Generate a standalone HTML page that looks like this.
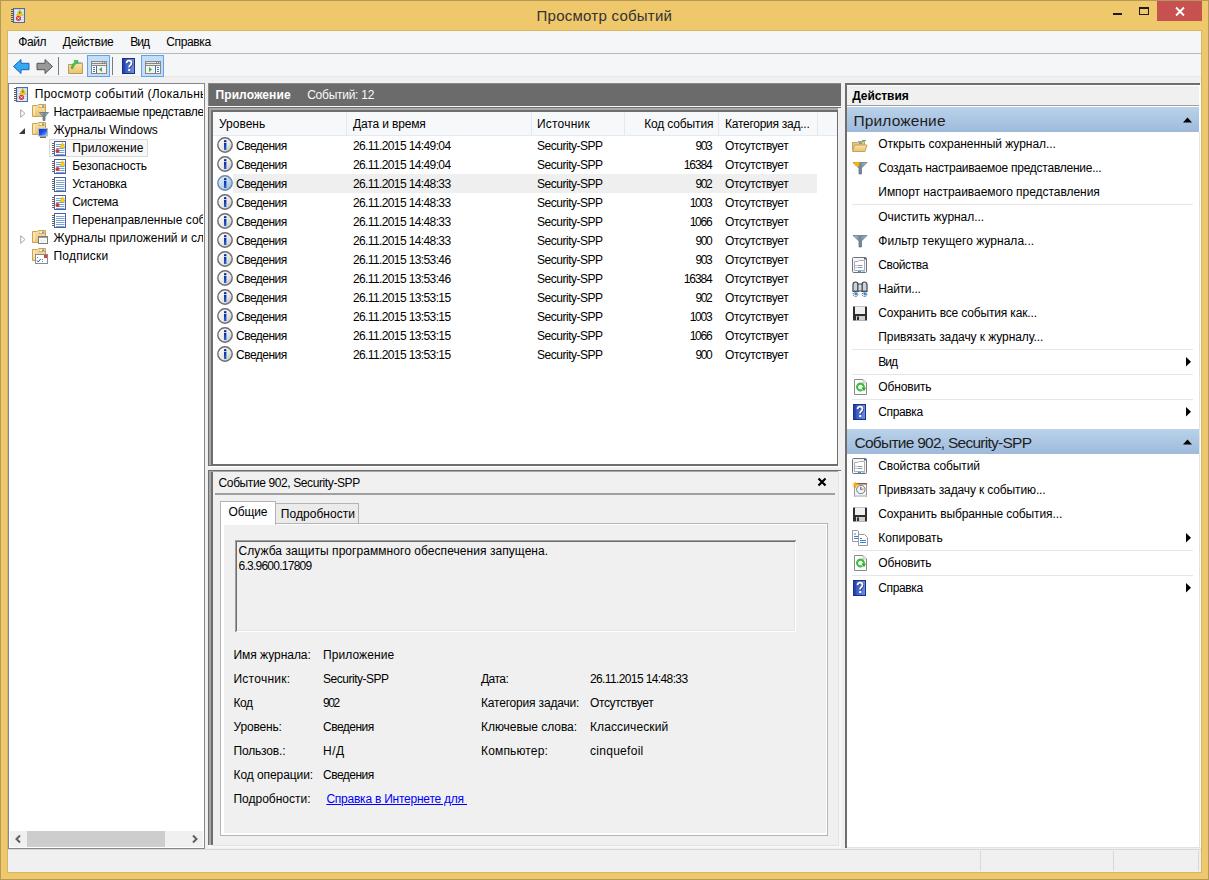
<!DOCTYPE html>
<html><head><meta charset="utf-8">
<style>
*{margin:0;padding:0;box-sizing:border-box}
html,body{width:1209px;height:880px;overflow:hidden}
body{position:relative;background:#efc86b;font-family:"Liberation Sans",sans-serif;font-size:11.5px;color:#000}
.a{position:absolute}
.t{position:absolute;white-space:nowrap}
.clip{position:absolute;overflow:hidden}
</style></head><body>

<svg width="0" height="0" style="position:absolute">
<defs>
<linearGradient id="gInfo" x1="0" y1="0" x2="1" y2="1"><stop offset="0" stop-color="#ffffff"/><stop offset="0.6" stop-color="#e6e6e6"/><stop offset="1" stop-color="#b8b8b8"/></linearGradient>
<linearGradient id="gInfoS" x1="0" y1="0" x2="1" y2="1"><stop offset="0" stop-color="#e4f0fb"/><stop offset="0.6" stop-color="#b9d3ee"/><stop offset="1" stop-color="#88aedb"/></linearGradient>
<linearGradient id="gI" x1="0" y1="0" x2="0" y2="1"><stop offset="0" stop-color="#0c2e98"/><stop offset="1" stop-color="#2a66d8"/></linearGradient><linearGradient id="gBlue" x1="0" y1="0" x2="0" y2="1"><stop offset="0" stop-color="#bcd4ec"/><stop offset="1" stop-color="#9cb9dc"/></linearGradient>
<linearGradient id="gFold" x1="0" y1="0" x2="0" y2="1"><stop offset="0" stop-color="#fbe3a4"/><stop offset="1" stop-color="#e8c274"/></linearGradient>
<linearGradient id="gHelp" x1="0" y1="0" x2="1" y2="0"><stop offset="0" stop-color="#3556c0"/><stop offset="1" stop-color="#6c8fe2"/></linearGradient>
<linearGradient id="gFun" x1="0" y1="0" x2="1" y2="0"><stop offset="0" stop-color="#c9d3dc"/><stop offset="0.5" stop-color="#6e8394"/><stop offset="1" stop-color="#b6c2cc"/></linearGradient>
<symbol id="info" viewBox="0 0 16 16"><circle cx="8" cy="8" r="7.2" fill="url(#gInfo)" stroke="#6c6c6c" stroke-width="1.4"/><rect x="7" y="6" width="2.4" height="7" fill="url(#gI)"/><rect x="7" y="3.2" width="2.4" height="2" fill="#0a2a90"/></symbol>
<symbol id="infoS" viewBox="0 0 16 16"><circle cx="8" cy="8" r="7.2" fill="url(#gInfoS)" stroke="#6a86aa" stroke-width="1.4"/><rect x="7" y="6" width="2.4" height="7" fill="url(#gI)"/><rect x="7" y="3.2" width="2.4" height="2" fill="#0a2a90"/></symbol>
<symbol id="logw" viewBox="0 0 14 15"><rect x="2.5" y="0.5" width="11" height="14" fill="#fff" stroke="#4c5fa6"/><g stroke="#7ba4d6"><path d="M4 3.5h8.5M4 5.5h8.5M4 7.5h8.5M4 9.5h8.5M4 11.5h8.5M4 13.5h8.5"/></g><g fill="#666"><rect x="0" y="2" width="3" height="1"/><rect x="0" y="4" width="3" height="1"/><rect x="0" y="6" width="3" height="1"/><rect x="0" y="8" width="3" height="1"/><rect x="0" y="10" width="3" height="1"/><rect x="0" y="12" width="3" height="1"/></g><path d="M10.5 1.5 L13 6.5 L8 6.5Z" fill="#f4d600" stroke="#d8b000" stroke-width="0.5"/><circle cx="5.5" cy="10" r="2" fill="#d8343a"/></symbol>
<symbol id="log" viewBox="0 0 14 15"><rect x="2.5" y="0.5" width="11" height="14" fill="#fff" stroke="#4c5fa6"/><g stroke="#7ba4d6"><path d="M4 3.5h8.5M4 5.5h8.5M4 7.5h8.5M4 9.5h8.5M4 11.5h8.5M4 13.5h8.5"/></g><g fill="#666"><rect x="0" y="2" width="3" height="1"/><rect x="0" y="4" width="3" height="1"/><rect x="0" y="6" width="3" height="1"/><rect x="0" y="8" width="3" height="1"/><rect x="0" y="10" width="3" height="1"/><rect x="0" y="12" width="3" height="1"/></g></symbol>
<symbol id="ev" viewBox="0 0 14 15"><rect x="2.5" y="0.5" width="11" height="14" fill="#c6d8ef" stroke="#4f6aa8"/><g stroke="#fff" stroke-width="0.9"><path d="M4 3h8.5M4 5.5h8.5M4 8h8.5M4 10.5h8.5M4 13h8.5"/></g><g fill="#5a5a5a"><rect x="0" y="1" width="3" height="1"/><rect x="0" y="3" width="3" height="1"/><rect x="0" y="5" width="3" height="1"/><rect x="0" y="7" width="3" height="1"/><rect x="0" y="9" width="3" height="1"/><rect x="0" y="11" width="3" height="1"/><rect x="0" y="13" width="3" height="1"/></g><path d="M8.8 1.5 L12 7.3 L5.6 7.3Z" fill="#f4d400" stroke="#cfa800" stroke-width="0.6"/><rect x="8.4" y="3.5" width="0.9" height="2.2" fill="#333"/><circle cx="7.5" cy="10.3" r="2.6" fill="#d33a3a"/><path d="M6.5 9.3l2 2M8.5 9.3l-2 2" stroke="#fff" stroke-width="0.9"/></symbol>
<symbol id="fold" viewBox="0 0 14 13"><path d="M0.5 1.5 H5.5 L6.5 0.5 H13.5 V12.5 H0.5 Z" fill="url(#gFold)" stroke="#c9a35a"/><rect x="6.5" y="1" width="6.5" height="2.5" fill="#f3d38c"/><rect x="8" y="1.6" width="2" height="1.3" fill="#fff"/><rect x="10" y="1.6" width="2" height="1.3" fill="#4b95e6"/><path d="M6.5 3.5 H13" stroke="#c9a35a" stroke-width="0.8"/><rect x="1.5" y="2.5" width="1.2" height="9" fill="#fff1c4"/></symbol>
<symbol id="funnel" viewBox="0 0 10 9"><path d="M0.5 0.5h9l-3.5 4v4h-2v-4z" fill="url(#gFun)" stroke="#566878" stroke-width="0.7"/></symbol>
<symbol id="arrL" viewBox="0 0 17 16"><path d="M0.5 7.5 L8 0.5 L8 4.3 L16 4.3 L16 10.7 L8 10.7 L8 14.5Z" fill="#35a9f0" stroke="#1d62c0" stroke-width="1"/></symbol>
<symbol id="arrR" viewBox="0 0 17 16"><path d="M16.5 7.5 L9 0.5 L9 4.3 L1 4.3 L1 10.7 L9 10.7 L9 14.5Z" fill="#9a9a9a" stroke="#555" stroke-width="1"/></symbol>
<symbol id="help" viewBox="0 0 13 16"><rect x="0" y="0" width="13" height="16" fill="#1a2f86"/><rect x="1" y="1" width="2" height="14" fill="#2446b0"/><rect x="3" y="1" width="9" height="14" fill="url(#gHelp)"/><path d="M4.6 5.2 Q4.6 2.6 7 2.6 Q9.5 2.6 9.5 5 Q9.5 6.5 8 7.4 Q7.2 8 7.2 9.6" fill="none" stroke="#222c60" stroke-width="1.8" transform="translate(0.6,0.6)"/><path d="M4.6 5.2 Q4.6 2.6 7 2.6 Q9.5 2.6 9.5 5 Q9.5 6.5 8 7.4 Q7.2 8 7.2 9.6" fill="none" stroke="#fff" stroke-width="1.8"/><rect x="6.2" y="11" width="2" height="2" fill="#fff"/></symbol>
<symbol id="panL" viewBox="0 0 16 13"><rect x="0" y="0" width="16" height="13" fill="#878787"/><rect x="1" y="1" width="10" height="1" fill="#e6e6e6"/><rect x="12" y="1" width="1" height="1" fill="#e6e6e6"/><rect x="14" y="1" width="1" height="1" fill="#e6e6e6"/><rect x="1" y="3" width="14" height="1" fill="#e6e6e6"/><rect x="1" y="5" width="4" height="7" fill="#fff"/><rect x="5" y="5" width="1" height="7" fill="#5d6b7e"/><rect x="6" y="5" width="9" height="7" fill="#f3f3f3"/><g fill="#3a78d6"><rect x="2" y="6" width="2" height="1"/><rect x="2" y="8" width="2" height="1"/><rect x="2" y="10" width="2" height="1"/></g><path d="M11 6 L8 8.5 L11 11Z" fill="#3cb43c"/></symbol>
<symbol id="panR" viewBox="0 0 16 13"><rect x="0" y="0" width="16" height="13" fill="#878787"/><rect x="1" y="1" width="10" height="1" fill="#e6e6e6"/><rect x="12" y="1" width="1" height="1" fill="#e6e6e6"/><rect x="14" y="1" width="1" height="1" fill="#e6e6e6"/><rect x="1" y="3" width="14" height="1" fill="#e6e6e6"/><rect x="1" y="5" width="9" height="7" fill="#f3f3f3"/><rect x="10" y="5" width="1" height="7" fill="#5d6b7e"/><rect x="11" y="5" width="4" height="7" fill="#fff"/><g fill="#3a78d6"><rect x="12" y="6" width="2" height="1"/><rect x="12" y="8" width="2" height="1"/><rect x="12" y="10" width="2" height="1"/></g><path d="M4 6 L7 8.5 L4 11Z" fill="#3cb43c"/></symbol>
</defs></svg>
<div class="a" style="left:0;top:0;width:1209px;height:880px;border:1px solid #b39a5b"></div>
<div class="a" style="left:7px;top:30px;width:1195px;height:843px;border:1px solid #d8b465;background:#f0f0f0"></div>
<div class="t" style="left:536.60px;top:6px;font-size:15px;line-height:19px;letter-spacing:0.246px;color:#333;">Просмотр событий</div>
<svg class="a" style="left:11px;top:8px" width="14" height="15"><use href="#ev"/></svg>
<div class="a" style="left:1157px;top:1px;width:45px;height:20px;background:#c75050;"></div>
<svg class="a" style="left:1157px;top:1px" width="45" height="20"><path d="M19 6.5 L27 14.5 M27 6.5 L19 14.5" stroke="#fff" stroke-width="1.8"/></svg>
<div class="a" style="left:1113px;top:13px;width:9px;height:2px;background:#1c1c1c;"></div>
<div class="a" style="left:1139px;top:7px;width:10px;height:8px;border:1px solid #1c1c1c;border-top-width:2px"></div>
<div class="a" style="left:8px;top:31px;width:1193px;height:22px;background:#f5f6f7;"></div>
<div class="a" style="left:8px;top:53px;width:1193px;height:1px;background:#b9b9b9;"></div>
<div class="a" style="left:8px;top:54px;width:1193px;height:22px;background:#f5f6f7;"></div>
<div class="a" style="left:8px;top:76px;width:1193px;height:1px;background:#e7e7e7;"></div>
<div class="t" style="left:18.30px;top:35px;font-size:12px;line-height:15px;letter-spacing:-0.400px;">Файл</div>
<div class="t" style="left:62.80px;top:35px;font-size:12px;line-height:15px;letter-spacing:-0.254px;">Действие</div>
<div class="t" style="left:130.30px;top:35px;font-size:12px;line-height:15px;letter-spacing:-0.954px;">Вид</div>
<div class="t" style="left:166.30px;top:35px;font-size:12px;line-height:15px;letter-spacing:-0.383px;">Справка</div>
<svg class="a" style="left:12.5px;top:59px" width="17" height="16"><use href="#arrL"/></svg>
<svg class="a" style="left:35.5px;top:59px" width="17" height="16"><use href="#arrR"/></svg>
<div class="a" style="left:58px;top:57px;width:1px;height:18px;background:#7c7c7c;"></div>
<svg class="a" style="left:68px;top:59px" width="15" height="15"><path d="M0.5 5.5h5l1-1.5h8v10.5h-14z" fill="url(#gFold)" stroke="#c09a50"/><path d="M3 9 C4 6 5 4 7 3 L6 1.5 L10 1.5 L9.5 5 L8.5 4 C7 5 6 7 4.5 10Z" fill="#4cc64c" stroke="#2f9a2f" stroke-width="0.6"/><rect x="10" y="3.3" width="3" height="1.4" fill="#6aa9ea"/></svg>
<div class="a" style="left:87px;top:55px;width:23px;height:22px;background:#c5def7;border:1px solid #62a3e6;"></div>
<svg class="a" style="left:91px;top:61px" width="16" height="13"><use href="#panL"/></svg>
<div class="a" style="left:112px;top:57px;width:1px;height:18px;background:#7c7c7c;"></div>
<svg class="a" style="left:122px;top:58px" width="13" height="16"><use href="#help"/></svg>
<div class="a" style="left:141px;top:55px;width:23px;height:22px;background:#c5def7;border:1px solid #62a3e6;"></div>
<svg class="a" style="left:145px;top:61px" width="16" height="13"><use href="#panR"/></svg>
<div class="a" style="left:8px;top:83px;width:197px;height:766px;background:#fff;border:1px solid #828790"></div>
<div class="clip" style="left:9px;top:84px;width:194px;height:746px">
<svg class="a" style="left:5px;top:3px" width="14" height="15"><use href="#ev"/></svg>
<div class="t" style="left:25.80px;top:3px;font-size:12px;line-height:15px;letter-spacing:0.236px;">Просмотр событий (Локальный)</div>
<svg class="a" style="left:11px;top:25px" width="6" height="9"><path d="M0.7 0.7 L5 4.5 L0.7 8.3Z" fill="none" stroke="#a6a6a6" stroke-width="1"/></svg>
<svg class="a" style="left:23px;top:20px" width="14" height="13"><use href="#fold"/></svg>
<svg class="a" style="left:30px;top:28px" width="10" height="9"><use href="#funnel"/></svg>
<div class="t" style="left:44.50px;top:21px;font-size:12px;line-height:15px;letter-spacing:-0.311px;">Настраиваемые представления</div>
<svg class="a" style="left:10px;top:44px" width="6" height="6"><path d="M6 0 L6 6 L0 6Z" fill="#3a3a3a"/></svg>
<svg class="a" style="left:23px;top:38px" width="14" height="13"><use href="#fold"/></svg>
<svg class="a" style="left:29px;top:44px" width="10" height="10"><defs><linearGradient id="gMon" x1="0" y1="0" x2="1" y2="1"><stop offset="0" stop-color="#0a2ad8"/><stop offset="0.55" stop-color="#1f5ae8"/><stop offset="1" stop-color="#c8d4ff"/></linearGradient></defs><rect x="0.5" y="0.5" width="9" height="7.5" fill="url(#gMon)" stroke="#b8b8b8"/><rect x="2" y="8.5" width="6" height="1.5" fill="#666"/></svg>
<div class="t" style="left:44.50px;top:39px;font-size:12px;line-height:15px;letter-spacing:-0.009px;">Журналы Windows</div>
<div class="a" style="left:40px;top:55px;width:99px;height:18px;background:#f7f7f7;border:1px solid #dadada"></div>
<svg class="a" style="left:43px;top:57px" width="14" height="15"><use href="#logw"/></svg>
<div class="t" style="left:63.30px;top:57px;font-size:12px;line-height:15px;letter-spacing:0.088px;">Приложение</div>
<svg class="a" style="left:43px;top:75px" width="14" height="15"><use href="#logw"/></svg>
<div class="t" style="left:63.30px;top:75px;font-size:12px;line-height:15px;letter-spacing:-0.163px;">Безопасность</div>
<svg class="a" style="left:43px;top:93px" width="14" height="15"><use href="#log"/></svg>
<div class="t" style="left:63.30px;top:93px;font-size:12px;line-height:15px;letter-spacing:-0.256px;">Установка</div>
<svg class="a" style="left:43px;top:111px" width="14" height="15"><use href="#logw"/></svg>
<div class="t" style="left:63.30px;top:111px;font-size:12px;line-height:15px;letter-spacing:-0.376px;">Система</div>
<svg class="a" style="left:43px;top:129px" width="14" height="15"><use href="#log"/></svg>
<div class="t" style="left:63.30px;top:129px;font-size:12px;line-height:15px;">Перенаправленные события</div>
<svg class="a" style="left:11px;top:151px" width="6" height="9"><path d="M0.7 0.7 L5 4.5 L0.7 8.3Z" fill="none" stroke="#a6a6a6" stroke-width="1"/></svg>
<svg class="a" style="left:23px;top:146px" width="14" height="13"><use href="#fold"/></svg>
<svg class="a" style="left:29px;top:152px" width="10" height="8"><rect x="0.5" y="0.5" width="9" height="7" fill="#fff" stroke="#7d7d7d"/><rect x="1" y="1" width="8" height="1" fill="#9a9a9a"/><rect x="2" y="3.5" width="6" height="3" fill="#f0f0f0"/></svg>
<div class="t" style="left:44.50px;top:147px;font-size:12px;line-height:15px;">Журналы приложений и служб</div>
<svg class="a" style="left:23px;top:164px" width="14" height="13"><use href="#fold"/></svg>
<svg class="a" style="left:26px;top:170px" width="13" height="10"><rect x="0.5" y="0.5" width="12" height="9" fill="#fff" stroke="#8a8a8a"/><rect x="9" y="1" width="3" height="3" fill="#d84040"/><g fill="#3a80d8"><rect x="2" y="3" width="1" height="1"/><rect x="7" y="5" width="1" height="1"/><rect x="7" y="7" width="1" height="1"/></g><path d="M2 6.5 l1.2 1.5 l2.5 -3" stroke="#1e5ec8" fill="none" stroke-width="1"/></svg>
<div class="t" style="left:44.50px;top:165px;font-size:12px;line-height:15px;letter-spacing:0.216px;">Подписки</div>
</div>
<div class="a" style="left:10px;top:831px;width:193px;height:16px;background:#f0f0f0;"></div>
<div class="a" style="left:27px;top:831px;width:138px;height:16px;background:#cdcdcd;"></div>
<svg class="a" style="left:14px;top:834px" width="8" height="10"><path d="M6 1.5 L2.5 5 L6 8.5" fill="none" stroke="#606060" stroke-width="2"/></svg>
<svg class="a" style="left:191px;top:834px" width="8" height="10"><path d="M2 1.5 L5.5 5 L2 8.5" fill="none" stroke="#606060" stroke-width="2"/></svg>
<div class="a" style="left:208px;top:83px;width:633px;height:23px;background:#6b6b6b;"></div>
<div class="a" style="left:208px;top:83px;width:633px;height:1px;background:#888888;"></div>
<div class="a" style="left:208px;top:83px;width:1px;height:23px;background:#888888;"></div>
<div class="a" style="left:208px;top:106px;width:633px;height:1px;background:#f7f7f7;"></div>
<div class="t" style="left:215.50px;top:88px;font-size:12px;line-height:15px;letter-spacing:0.087px;color:#fff;font-weight:bold;">Приложение</div>
<div class="t" style="left:307.20px;top:88px;font-size:12px;line-height:15px;letter-spacing:-0.258px;color:#fafafa;">Событий: 12</div>
<div class="a" style="left:208px;top:107px;width:633px;height:359px;background:#6e6e6e;"></div>
<div class="a" style="left:209px;top:108px;width:631px;height:357px;background:#a8a8a8;"></div>
<div class="a" style="left:211px;top:110px;width:627px;height:355px;background:#6e6e6e;"></div>
<div class="a" style="left:213px;top:112px;width:624px;height:352px;background:#ffffff;"></div>
<div class="a" style="left:838px;top:108px;width:3px;height:358px;background:#f0f0f0;"></div>
<div class="a" style="left:208px;top:466px;width:633px;height:4px;background:#f0f0f0;"></div>
<div class="a" style="left:209px;top:466px;width:631px;height:1px;background:#ffffff;"></div>
<div class="a" style="left:213px;top:112px;width:624px;height:23px;background:#f7f8fa;"></div>
<div class="a" style="left:213px;top:135px;width:624px;height:1px;background:#e1ebf6;"></div>
<div class="a" style="left:346px;top:112px;width:1px;height:23px;background:#e3e9f1;"></div>
<div class="a" style="left:531px;top:112px;width:1px;height:23px;background:#e3e9f1;"></div>
<div class="a" style="left:624px;top:112px;width:1px;height:23px;background:#e3e9f1;"></div>
<div class="a" style="left:718px;top:112px;width:1px;height:23px;background:#e3e9f1;"></div>
<div class="a" style="left:817px;top:112px;width:1px;height:23px;background:#e3e9f1;"></div>
<div class="t" style="left:219.00px;top:117px;font-size:12px;line-height:15px;">Уровень</div>
<div class="t" style="left:353.00px;top:117px;font-size:12px;line-height:15px;letter-spacing:-0.147px;">Дата и время</div>
<div class="t" style="left:537.00px;top:117px;font-size:12px;line-height:15px;letter-spacing:0.203px;">Источник</div>
<div class="t" style="left:644.20px;top:117px;font-size:12px;line-height:15px;letter-spacing:-0.144px;">Код события</div>
<div class="t" style="left:725.00px;top:117px;font-size:12px;line-height:15px;letter-spacing:-0.258px;">Категория зад...</div>
<svg class="a" style="left:217px;top:137px" width="16" height="16"><use href="#info"/></svg>
<div class="t" style="left:236.00px;top:139px;font-size:12px;line-height:15px;letter-spacing:-0.503px;">Сведения</div>
<div class="t" style="left:353.00px;top:139px;font-size:12px;line-height:15px;letter-spacing:-0.619px;">26.11.2015 14:49:04</div>
<div class="t" style="left:537.00px;top:139px;font-size:12px;line-height:15px;letter-spacing:-0.477px;">Security-SPP</div>
<div class="t" style="left:695.60px;top:139px;font-size:12px;line-height:15px;letter-spacing:-1.474px;">903</div>
<div class="t" style="left:725.00px;top:139px;font-size:12px;line-height:15px;letter-spacing:-0.360px;">Отсутствует</div>
<svg class="a" style="left:217px;top:156px" width="16" height="16"><use href="#info"/></svg>
<div class="t" style="left:236.00px;top:158px;font-size:12px;line-height:15px;letter-spacing:-0.503px;">Сведения</div>
<div class="t" style="left:353.00px;top:158px;font-size:12px;line-height:15px;letter-spacing:-0.619px;">26.11.2015 14:49:04</div>
<div class="t" style="left:537.00px;top:158px;font-size:12px;line-height:15px;letter-spacing:-0.477px;">Security-SPP</div>
<div class="t" style="left:683.80px;top:158px;font-size:12px;line-height:15px;letter-spacing:-1.124px;">16384</div>
<div class="t" style="left:725.00px;top:158px;font-size:12px;line-height:15px;letter-spacing:-0.360px;">Отсутствует</div>
<div class="a" style="left:233px;top:174px;width:584px;height:19px;background:#efefef;"></div>
<svg class="a" style="left:217px;top:175px" width="16" height="16"><use href="#infoS"/></svg>
<div class="t" style="left:236.00px;top:177px;font-size:12px;line-height:15px;letter-spacing:-0.503px;">Сведения</div>
<div class="t" style="left:353.00px;top:177px;font-size:12px;line-height:15px;letter-spacing:-0.619px;">26.11.2015 14:48:33</div>
<div class="t" style="left:537.00px;top:177px;font-size:12px;line-height:15px;letter-spacing:-0.477px;">Security-SPP</div>
<div class="t" style="left:695.50px;top:177px;font-size:12px;line-height:15px;letter-spacing:-1.424px;">902</div>
<div class="t" style="left:725.00px;top:177px;font-size:12px;line-height:15px;letter-spacing:-0.360px;">Отсутствует</div>
<svg class="a" style="left:217px;top:194px" width="16" height="16"><use href="#info"/></svg>
<div class="t" style="left:236.00px;top:196px;font-size:12px;line-height:15px;letter-spacing:-0.503px;">Сведения</div>
<div class="t" style="left:353.00px;top:196px;font-size:12px;line-height:15px;letter-spacing:-0.619px;">26.11.2015 14:48:33</div>
<div class="t" style="left:537.00px;top:196px;font-size:12px;line-height:15px;letter-spacing:-0.477px;">Security-SPP</div>
<div class="t" style="left:689.70px;top:196px;font-size:12px;line-height:15px;letter-spacing:-1.240px;">1003</div>
<div class="t" style="left:725.00px;top:196px;font-size:12px;line-height:15px;letter-spacing:-0.360px;">Отсутствует</div>
<svg class="a" style="left:217px;top:213px" width="16" height="16"><use href="#info"/></svg>
<div class="t" style="left:236.00px;top:215px;font-size:12px;line-height:15px;letter-spacing:-0.503px;">Сведения</div>
<div class="t" style="left:353.00px;top:215px;font-size:12px;line-height:15px;letter-spacing:-0.619px;">26.11.2015 14:48:33</div>
<div class="t" style="left:537.00px;top:215px;font-size:12px;line-height:15px;letter-spacing:-0.477px;">Security-SPP</div>
<div class="t" style="left:689.70px;top:215px;font-size:12px;line-height:15px;letter-spacing:-1.240px;">1066</div>
<div class="t" style="left:725.00px;top:215px;font-size:12px;line-height:15px;letter-spacing:-0.360px;">Отсутствует</div>
<svg class="a" style="left:217px;top:232px" width="16" height="16"><use href="#info"/></svg>
<div class="t" style="left:236.00px;top:234px;font-size:12px;line-height:15px;letter-spacing:-0.503px;">Сведения</div>
<div class="t" style="left:353.00px;top:234px;font-size:12px;line-height:15px;letter-spacing:-0.619px;">26.11.2015 14:48:33</div>
<div class="t" style="left:537.00px;top:234px;font-size:12px;line-height:15px;letter-spacing:-0.477px;">Security-SPP</div>
<div class="t" style="left:695.60px;top:234px;font-size:12px;line-height:15px;letter-spacing:-1.474px;">900</div>
<div class="t" style="left:725.00px;top:234px;font-size:12px;line-height:15px;letter-spacing:-0.360px;">Отсутствует</div>
<svg class="a" style="left:217px;top:251px" width="16" height="16"><use href="#info"/></svg>
<div class="t" style="left:236.00px;top:253px;font-size:12px;line-height:15px;letter-spacing:-0.503px;">Сведения</div>
<div class="t" style="left:353.00px;top:253px;font-size:12px;line-height:15px;letter-spacing:-0.619px;">26.11.2015 13:53:46</div>
<div class="t" style="left:537.00px;top:253px;font-size:12px;line-height:15px;letter-spacing:-0.477px;">Security-SPP</div>
<div class="t" style="left:695.60px;top:253px;font-size:12px;line-height:15px;letter-spacing:-1.474px;">903</div>
<div class="t" style="left:725.00px;top:253px;font-size:12px;line-height:15px;letter-spacing:-0.360px;">Отсутствует</div>
<svg class="a" style="left:217px;top:270px" width="16" height="16"><use href="#info"/></svg>
<div class="t" style="left:236.00px;top:272px;font-size:12px;line-height:15px;letter-spacing:-0.503px;">Сведения</div>
<div class="t" style="left:353.00px;top:272px;font-size:12px;line-height:15px;letter-spacing:-0.619px;">26.11.2015 13:53:46</div>
<div class="t" style="left:537.00px;top:272px;font-size:12px;line-height:15px;letter-spacing:-0.477px;">Security-SPP</div>
<div class="t" style="left:683.80px;top:272px;font-size:12px;line-height:15px;letter-spacing:-1.124px;">16384</div>
<div class="t" style="left:725.00px;top:272px;font-size:12px;line-height:15px;letter-spacing:-0.360px;">Отсутствует</div>
<svg class="a" style="left:217px;top:289px" width="16" height="16"><use href="#info"/></svg>
<div class="t" style="left:236.00px;top:291px;font-size:12px;line-height:15px;letter-spacing:-0.503px;">Сведения</div>
<div class="t" style="left:353.00px;top:291px;font-size:12px;line-height:15px;letter-spacing:-0.619px;">26.11.2015 13:53:15</div>
<div class="t" style="left:537.00px;top:291px;font-size:12px;line-height:15px;letter-spacing:-0.477px;">Security-SPP</div>
<div class="t" style="left:695.50px;top:291px;font-size:12px;line-height:15px;letter-spacing:-1.424px;">902</div>
<div class="t" style="left:725.00px;top:291px;font-size:12px;line-height:15px;letter-spacing:-0.360px;">Отсутствует</div>
<svg class="a" style="left:217px;top:308px" width="16" height="16"><use href="#info"/></svg>
<div class="t" style="left:236.00px;top:310px;font-size:12px;line-height:15px;letter-spacing:-0.503px;">Сведения</div>
<div class="t" style="left:353.00px;top:310px;font-size:12px;line-height:15px;letter-spacing:-0.619px;">26.11.2015 13:53:15</div>
<div class="t" style="left:537.00px;top:310px;font-size:12px;line-height:15px;letter-spacing:-0.477px;">Security-SPP</div>
<div class="t" style="left:689.70px;top:310px;font-size:12px;line-height:15px;letter-spacing:-1.240px;">1003</div>
<div class="t" style="left:725.00px;top:310px;font-size:12px;line-height:15px;letter-spacing:-0.360px;">Отсутствует</div>
<svg class="a" style="left:217px;top:327px" width="16" height="16"><use href="#info"/></svg>
<div class="t" style="left:236.00px;top:329px;font-size:12px;line-height:15px;letter-spacing:-0.503px;">Сведения</div>
<div class="t" style="left:353.00px;top:329px;font-size:12px;line-height:15px;letter-spacing:-0.619px;">26.11.2015 13:53:15</div>
<div class="t" style="left:537.00px;top:329px;font-size:12px;line-height:15px;letter-spacing:-0.477px;">Security-SPP</div>
<div class="t" style="left:689.70px;top:329px;font-size:12px;line-height:15px;letter-spacing:-1.240px;">1066</div>
<div class="t" style="left:725.00px;top:329px;font-size:12px;line-height:15px;letter-spacing:-0.360px;">Отсутствует</div>
<svg class="a" style="left:217px;top:346px" width="16" height="16"><use href="#info"/></svg>
<div class="t" style="left:236.00px;top:348px;font-size:12px;line-height:15px;letter-spacing:-0.503px;">Сведения</div>
<div class="t" style="left:353.00px;top:348px;font-size:12px;line-height:15px;letter-spacing:-0.619px;">26.11.2015 13:53:15</div>
<div class="t" style="left:537.00px;top:348px;font-size:12px;line-height:15px;letter-spacing:-0.477px;">Security-SPP</div>
<div class="t" style="left:695.60px;top:348px;font-size:12px;line-height:15px;letter-spacing:-1.474px;">900</div>
<div class="t" style="left:725.00px;top:348px;font-size:12px;line-height:15px;letter-spacing:-0.360px;">Отсутствует</div>
<div class="a" style="left:208px;top:470px;width:633px;height:377px;background:#6e6e6e;"></div>
<div class="a" style="left:209px;top:471px;width:631px;height:375px;background:#a8a8a8;"></div>
<div class="a" style="left:211px;top:472px;width:627px;height:373px;background:#6e6e6e;"></div>
<div class="a" style="left:213px;top:472px;width:625px;height:373px;background:#f0f0f0;"></div>
<div class="a" style="left:838px;top:471px;width:3px;height:377px;background:#f7f7f7;"></div>
<div class="a" style="left:208px;top:845px;width:633px;height:3px;background:#f7f7f7;"></div>
<div class="a" style="left:838px;top:472px;width:1px;height:374px;background:#e3e3e3;"></div>
<div class="a" style="left:213px;top:845px;width:626px;height:1px;background:#e3e3e3;"></div>
<div class="t" style="left:218.60px;top:476px;font-size:12px;line-height:15px;letter-spacing:-0.395px;">Событие 902, Security-SPP</div>
<svg class="a" style="left:817px;top:477px" width="10" height="10"><path d="M1.5 1.5 L8.5 8.5 M8.5 1.5 L1.5 8.5" stroke="#000" stroke-width="2.2"/></svg>
<div class="a" style="left:215px;top:493px;width:620px;height:2px;background:#a0a0a0;"></div>
<div class="a" style="left:220px;top:523px;width:608px;height:313px;background:#ffffff;border:1px solid #b4b4b4;"></div>
<div class="a" style="left:224px;top:525px;width:602px;height:308px;background:#f0f0f0;"></div>
<div class="a" style="left:275px;top:503px;width:84px;height:20px;background:#ebebeb;border:1px solid #b4b4b4;border-bottom:none;"></div>
<div class="a" style="left:220px;top:501px;width:56px;height:24px;background:#ffffff;border:1px solid #b4b4b4;border-bottom:none;"></div>
<div class="t" style="left:228.50px;top:505px;font-size:12px;line-height:15px;letter-spacing:-0.121px;">Общие</div>
<div class="t" style="left:280.80px;top:507px;font-size:12px;line-height:15px;letter-spacing:0.045px;">Подробности</div>
<div class="a" style="left:235px;top:540px;width:561px;height:92px;background:#f0f0f0;border-top:2px solid #6e6e6e;border-left:2px solid #6e6e6e;border-right:1px solid #fff;border-bottom:1px solid #fff;"></div>
<div class="a" style="left:235px;top:540px;width:560px;height:1px;background:#a0a0a0;"></div>
<div class="a" style="left:235px;top:540px;width:1px;height:91px;background:#a0a0a0;"></div>
<div class="a" style="left:237px;top:630px;width:558px;height:1px;background:#e3e3e3;"></div>
<div class="a" style="left:794px;top:542px;width:1px;height:89px;background:#e3e3e3;"></div>
<div class="t" style="left:238.50px;top:544px;font-size:12px;line-height:15px;letter-spacing:0.057px;">Служба защиты программного обеспечения запущена.</div>
<div class="t" style="left:238.50px;top:559px;font-size:12px;line-height:15px;letter-spacing:-0.749px;">6.3.9600.17809</div>
<div class="t" style="left:233.50px;top:648px;font-size:12px;line-height:15px;letter-spacing:-0.035px;">Имя журнала:</div>
<div class="t" style="left:323.00px;top:648px;font-size:12px;line-height:15px;letter-spacing:0.088px;">Приложение</div>
<div class="t" style="left:233.50px;top:672px;font-size:12px;line-height:15px;letter-spacing:0.246px;">Источник:</div>
<div class="t" style="left:323.00px;top:672px;font-size:12px;line-height:15px;letter-spacing:-0.477px;">Security-SPP</div>
<div class="t" style="left:481.00px;top:672px;font-size:12px;line-height:15px;letter-spacing:-0.543px;">Дата:</div>
<div class="t" style="left:590.00px;top:672px;font-size:12px;line-height:15px;letter-spacing:-0.619px;">26.11.2015 14:48:33</div>
<div class="t" style="left:233.50px;top:696px;font-size:12px;line-height:15px;letter-spacing:-0.400px;">Код</div>
<div class="t" style="left:323.00px;top:696px;font-size:12px;line-height:15px;letter-spacing:-1.424px;">902</div>
<div class="t" style="left:481.00px;top:696px;font-size:12px;line-height:15px;letter-spacing:-0.186px;">Категория задачи:</div>
<div class="t" style="left:590.00px;top:696px;font-size:12px;line-height:15px;letter-spacing:-0.360px;">Отсутствует</div>
<div class="t" style="left:233.50px;top:720px;font-size:12px;line-height:15px;letter-spacing:-0.175px;">Уровень:</div>
<div class="t" style="left:323.00px;top:720px;font-size:12px;line-height:15px;letter-spacing:-0.503px;">Сведения</div>
<div class="t" style="left:481.00px;top:720px;font-size:12px;line-height:15px;letter-spacing:-0.049px;">Ключевые слова:</div>
<div class="t" style="left:590.00px;top:720px;font-size:12px;line-height:15px;letter-spacing:0.114px;">Классический</div>
<div class="t" style="left:233.50px;top:744px;font-size:12px;line-height:15px;letter-spacing:-0.167px;">Пользов.:</div>
<div class="t" style="left:323.00px;top:744px;font-size:12px;line-height:15px;letter-spacing:0.500px;">Н/Д</div>
<div class="t" style="left:481.00px;top:744px;font-size:12px;line-height:15px;letter-spacing:0.155px;">Компьютер:</div>
<div class="t" style="left:590.00px;top:744px;font-size:12px;line-height:15px;letter-spacing:0.285px;">cinquefoil</div>
<div class="t" style="left:233.50px;top:768px;font-size:12px;line-height:15px;letter-spacing:-0.076px;">Код операции:</div>
<div class="t" style="left:323.00px;top:768px;font-size:12px;line-height:15px;letter-spacing:-0.503px;">Сведения</div>
<div class="t" style="left:233.50px;top:792px;font-size:12px;line-height:15px;letter-spacing:-0.005px;">Подробности:</div>
<div class="t" style="left:326.40px;top:792px;font-size:12px;line-height:15px;letter-spacing:-0.233px;color:#0000ff;text-decoration:underline;">Справка в Интернете для </div>
<div class="a" style="left:845px;top:83px;width:356px;height:765px;background:#ffffff;"></div>
<div class="a" style="left:845px;top:83px;width:355px;height:2px;background:#6e6e6e;"></div>
<div class="a" style="left:845px;top:83px;width:2px;height:765px;background:#6e6e6e;"></div>
<div class="a" style="left:847px;top:86px;width:352px;height:19px;background:#f0f0f0;"></div>
<div class="a" style="left:847px;top:105px;width:352px;height:1px;background:#a0a0a0;"></div>
<div class="t" style="left:852.20px;top:89px;font-size:12px;line-height:15px;letter-spacing:-0.079px;font-weight:bold;">Действия</div>
<div class="a" style="left:847px;top:107px;width:352px;height:25px;background:linear-gradient(#bad2ea,#9ebadc);"></div>
<div class="t" style="left:853.50px;top:111px;font-size:15.5px;line-height:20px;letter-spacing:0.123px;color:#1e1e1e;">Приложение</div>
<svg class="a" style="left:1183px;top:117px" width="10" height="6"><path d="M0 5.5 L4.5 0.5 L9 5.5Z" fill="#000"/></svg>
<div class="t" style="left:878.30px;top:137px;font-size:12px;line-height:15px;letter-spacing:-0.038px;">Открыть сохраненный журнал...</div>
<svg class="a" style="left:852px;top:136px" width="16" height="16"><use href="#a_open"/></svg>
<div class="t" style="left:878.30px;top:161px;font-size:12px;line-height:15px;letter-spacing:-0.253px;">Создать настраиваемое представление...</div>
<svg class="a" style="left:852px;top:160px" width="16" height="16"><use href="#a_funO"/></svg>
<div class="t" style="left:878.30px;top:185px;font-size:12px;line-height:15px;letter-spacing:-0.044px;">Импорт настраиваемого представления</div>
<div class="a" style="left:852px;top:204px;width:341px;height:1px;background:#e6e6e6;"></div>
<div class="t" style="left:878.30px;top:210px;font-size:12px;line-height:15px;letter-spacing:-0.044px;">Очистить журнал...</div>
<div class="t" style="left:878.30px;top:234px;font-size:12px;line-height:15px;letter-spacing:0.022px;">Фильтр текущего журнала...</div>
<svg class="a" style="left:852px;top:233px" width="16" height="16"><use href="#a_funG"/></svg>
<div class="t" style="left:878.30px;top:258px;font-size:12px;line-height:15px;letter-spacing:-0.374px;">Свойства</div>
<svg class="a" style="left:852px;top:257px" width="16" height="16"><use href="#a_props"/></svg>
<div class="t" style="left:878.30px;top:282px;font-size:12px;line-height:15px;letter-spacing:-0.244px;">Найти...</div>
<svg class="a" style="left:852px;top:281px" width="16" height="16"><use href="#a_find"/></svg>
<div class="t" style="left:878.30px;top:306px;font-size:12px;line-height:15px;letter-spacing:-0.158px;">Сохранить все события как...</div>
<svg class="a" style="left:852px;top:305px" width="16" height="16"><use href="#a_save"/></svg>
<div class="t" style="left:878.30px;top:330px;font-size:12px;line-height:15px;letter-spacing:-0.084px;">Привязать задачу к журналу...</div>
<div class="a" style="left:852px;top:349px;width:341px;height:1px;background:#e6e6e6;"></div>
<div class="t" style="left:878.30px;top:355px;font-size:12px;line-height:15px;letter-spacing:-0.954px;">Вид</div>
<svg class="a" style="left:1186px;top:357px" width="6" height="10"><path d="M0 0 L5 4.8 L0 9.6Z" fill="#000"/></svg>
<div class="a" style="left:852px;top:374px;width:341px;height:1px;background:#e6e6e6;"></div>
<div class="t" style="left:878.30px;top:380px;font-size:12px;line-height:15px;letter-spacing:-0.155px;">Обновить</div>
<svg class="a" style="left:852px;top:379px" width="16" height="16"><use href="#a_refresh"/></svg>
<div class="a" style="left:852px;top:399px;width:341px;height:1px;background:#e6e6e6;"></div>
<div class="t" style="left:878.30px;top:405px;font-size:12px;line-height:15px;letter-spacing:-0.383px;">Справка</div>
<svg class="a" style="left:852px;top:404px" width="16" height="16"><use href="#a_helpS"/></svg>
<svg class="a" style="left:1186px;top:407px" width="6" height="10"><path d="M0 0 L5 4.8 L0 9.6Z" fill="#000"/></svg>
<div class="a" style="left:847px;top:429px;width:352px;height:25px;background:linear-gradient(#bad2ea,#9ebadc);"></div>
<div class="t" style="left:854.50px;top:433px;font-size:15.5px;line-height:20px;letter-spacing:-0.734px;color:#1e1e1e;">Событие 902, Security-SPP</div>
<svg class="a" style="left:1183px;top:439px" width="10" height="6"><path d="M0 5.5 L4.5 0.5 L9 5.5Z" fill="#000"/></svg>
<div class="t" style="left:878.30px;top:459px;font-size:12px;line-height:15px;letter-spacing:-0.102px;">Свойства событий</div>
<svg class="a" style="left:852px;top:458px" width="16" height="16"><use href="#a_props"/></svg>
<div class="t" style="left:878.30px;top:483px;font-size:12px;line-height:15px;letter-spacing:-0.131px;">Привязать задачу к событию...</div>
<svg class="a" style="left:852px;top:482px" width="16" height="16"><use href="#a_task"/></svg>
<div class="t" style="left:878.30px;top:507px;font-size:12px;line-height:15px;letter-spacing:-0.108px;">Сохранить выбранные события...</div>
<svg class="a" style="left:852px;top:506px" width="16" height="16"><use href="#a_save"/></svg>
<div class="t" style="left:878.30px;top:531px;font-size:12px;line-height:15px;letter-spacing:-0.007px;">Копировать</div>
<svg class="a" style="left:852px;top:530px" width="16" height="16"><use href="#a_copy"/></svg>
<svg class="a" style="left:1186px;top:533px" width="6" height="10"><path d="M0 0 L5 4.8 L0 9.6Z" fill="#000"/></svg>
<div class="a" style="left:852px;top:550px;width:341px;height:1px;background:#e6e6e6;"></div>
<div class="t" style="left:878.30px;top:556px;font-size:12px;line-height:15px;letter-spacing:-0.155px;">Обновить</div>
<svg class="a" style="left:852px;top:555px" width="16" height="16"><use href="#a_refresh"/></svg>
<div class="a" style="left:852px;top:575px;width:341px;height:1px;background:#e6e6e6;"></div>
<div class="t" style="left:878.30px;top:581px;font-size:12px;line-height:15px;letter-spacing:-0.383px;">Справка</div>
<svg class="a" style="left:852px;top:580px" width="16" height="16"><use href="#a_helpS"/></svg>
<svg class="a" style="left:1186px;top:583px" width="6" height="10"><path d="M0 0 L5 4.8 L0 9.6Z" fill="#000"/></svg>
<div class="a" style="left:1199px;top:132px;width:1px;height:716px;background:#e3e3e3;"></div>
<div class="a" style="left:847px;top:847px;width:353px;height:1px;background:#e3e3e3;"></div>
<div class="a" style="left:8px;top:849px;width:1193px;height:1px;background:#d8d8d8;"></div>
<div class="a" style="left:8px;top:850px;width:1193px;height:22px;background:#f0f0f0;"></div>
<div class="a" style="left:980px;top:851px;width:1px;height:20px;background:#d9d9d9;"></div>
<div class="a" style="left:1113px;top:851px;width:1px;height:20px;background:#d9d9d9;"></div>
<div class="a" style="left:1198px;top:851px;width:1px;height:20px;background:#d9d9d9;"></div>
<svg width="0" height="0" style="position:absolute"><defs>
<linearGradient id="gOrange" x1="0" y1="0" x2="1" y2="0"><stop offset="0" stop-color="#ffb400"/><stop offset="0.5" stop-color="#f59a00"/><stop offset="1" stop-color="#9aa6b2"/></linearGradient>
<symbol id="a_open" viewBox="0 0 16 16"><path d="M0.5 6.5 H5 L6 5.5 H12.5 V13.5 H0.5Z" fill="#e8c57a" stroke="#b8924a" stroke-width="0.8"/><path d="M2.5 9 H15 L13 15.5 H0.5Z" fill="url(#gFold)" stroke="#b8924a" stroke-width="0.8"/><rect x="10" y="4" width="4" height="1" fill="#3cc43c"/><rect x="7" y="6.3" width="3" height="1.4" fill="#4a8ee0"/></symbol>
<symbol id="a_funO" viewBox="0 0 16 16"><path d="M1 2.5h14l-5.5 5.5v6h-2.5v-6z" fill="url(#gFun)" stroke="#596b7a" stroke-width="0.7"/><path d="M1 2.5h7l-2 4.5z" fill="#ffa800"/><circle cx="5" cy="4" r="2.3" fill="#ffb000"/></symbol>
<symbol id="a_funG" viewBox="0 0 16 16"><path d="M1 2.5h14l-5.5 5.5v6h-2.5v-6z" fill="url(#gFun)" stroke="#596b7a" stroke-width="0.7"/></symbol>
<symbol id="a_props" viewBox="0 0 16 16"><rect x="0.5" y="0.5" width="14" height="15" rx="1" fill="#f5f5f5" stroke="#727272"/><rect x="12" y="1" width="2" height="1.5" fill="#4a5a90"/><path d="M2.5 4.5 H6 L7 3.5 H12.5 V13.5 H2.5Z" fill="#fff" stroke="#a9adbd"/><rect x="5.5" y="8" width="5" height="1" fill="#9a9a9a"/><rect x="5.5" y="10" width="5" height="1" fill="#9a9a9a"/><rect x="3.5" y="8" width="1" height="1" fill="#1e9cf0"/><rect x="3.5" y="10" width="1" height="1" fill="#888"/><rect x="6" y="14" width="3" height="1.5" fill="#1ea0f0"/><rect x="10" y="14" width="3" height="1" fill="#c8c8c8"/></symbol>
<symbol id="a_find" viewBox="0 0 16 16"><path d="M1 10.5 V4 Q1 1 3.5 1 Q6 1 6 4 V10.5 Z" fill="#cfd4da" stroke="#3c4650" stroke-width="1.2"/><path d="M10 10.5 V4 Q10 1 12.5 1 Q15 1 15 4 V10.5 Z" fill="#cfd4da" stroke="#3c4650" stroke-width="1.2"/><rect x="6" y="3" width="4" height="7" fill="#d8dce0" stroke="#3c4650" stroke-width="1"/><rect x="2" y="9.5" width="3" height="1.5" fill="#5a6670"/><rect x="11" y="9.5" width="3" height="1.5" fill="#5a6670"/><circle cx="3.5" cy="13.3" r="2.3" fill="#fff" stroke="#222" stroke-width="0.9" stroke-dasharray="1.1 1.1"/><circle cx="12.5" cy="13.3" r="2.3" fill="#fff" stroke="#222" stroke-width="0.9" stroke-dasharray="1.1 1.1"/><circle cx="3.8" cy="13" r="1.4" fill="#1e90f0"/><circle cx="12.8" cy="13" r="1.4" fill="#1e90f0"/></symbol>
<symbol id="a_save" viewBox="0 0 16 16"><path d="M1 1.5 H14.5 L15 2 V15.5 H1Z" fill="#2e2e2e"/><rect x="3" y="1.5" width="10" height="7.5" fill="#f0f0f2"/><rect x="4" y="11" width="9" height="4.5" fill="#cfcfcf"/><rect x="5" y="11.5" width="2" height="3.5" fill="#2e2e2e"/></symbol>
<symbol id="a_refresh" viewBox="0 0 16 16"><path d="M2.5 0.5 H11 L14.5 4 V15.5 H2.5 Z" fill="#fff" stroke="#8a8a8a"/><path d="M11 0.5 V4 H14.5" fill="#f2f2f2" stroke="#b0b0b0" stroke-width="0.8"/><path d="M10.2 10.9 A3.4 3.4 0 1 1 11.8 8.6" fill="none" stroke="#3cbf3c" stroke-width="2.1"/><path d="M9.3 8.4 L14 8.4 L12 12.2Z" fill="#24a824"/></symbol>
<symbol id="a_helpS" viewBox="0 0 16 16"><rect x="1" y="0" width="13" height="16" fill="#1a2f86"/><rect x="2" y="1" width="2" height="14" fill="#2446b0"/><rect x="4" y="1" width="9" height="14" fill="url(#gHelp)"/><path d="M5.6 5.2 Q5.6 2.6 8 2.6 Q10.5 2.6 10.5 5 Q10.5 6.5 9 7.4 Q8.2 8 8.2 9.6" fill="none" stroke="#222c60" stroke-width="1.8" transform="translate(0.6,0.6)"/><path d="M5.6 5.2 Q5.6 2.6 8 2.6 Q10.5 2.6 10.5 5 Q10.5 6.5 9 7.4 Q8.2 8 8.2 9.6" fill="none" stroke="#fff" stroke-width="1.8"/><rect x="7.2" y="11" width="2" height="2" fill="#fff"/></symbol>
<symbol id="a_task" viewBox="0 0 16 16"><rect x="2.5" y="1.5" width="12" height="13" fill="#f4f4f4" stroke="#9a9a9a"/><rect x="3" y="1" width="12" height="1.5" fill="#a04a3a"/><rect x="2.5" y="13" width="12" height="2" fill="#cfcfcf"/><circle cx="8.8" cy="7.5" r="4.2" fill="#eef3fa" stroke="#6a7a8a" stroke-width="1"/><path d="M8.8 4.8 V7.6 H11" stroke="#2a4a8a" fill="none" stroke-width="1"/><path d="M8.8 7.6 L11.5 5.5 A4 4 0 0 1 12.5 8Z" fill="#f0d060"/><g stroke="#ffb000" stroke-width="1"><path d="M3.5 0 V6M0.5 3 H6.5M1.3 0.8 L5.7 5.2M5.7 0.8 L1.3 5.2"/></g></symbol>
<symbol id="a_copy" viewBox="0 0 16 16"><path d="M0.5 0.5 H5.5 L6.5 1.5 V11.5 H0.5Z" fill="#fff" stroke="#9a9a9a"/><path d="M6.5 4.5 H12.5 L15.5 7.5 V15.5 H6.5Z" fill="#fff" stroke="#9a9a9a"/><g fill="#3a7ed8"><rect x="2" y="3.5" width="2" height="1"/><rect x="2" y="6" width="4" height="1"/><rect x="2" y="8" width="4" height="1"/><rect x="8" y="8" width="2" height="1"/><rect x="8" y="10" width="6" height="1"/><rect x="8" y="12" width="6" height="1"/></g></symbol>
</defs></svg>
</body></html>
